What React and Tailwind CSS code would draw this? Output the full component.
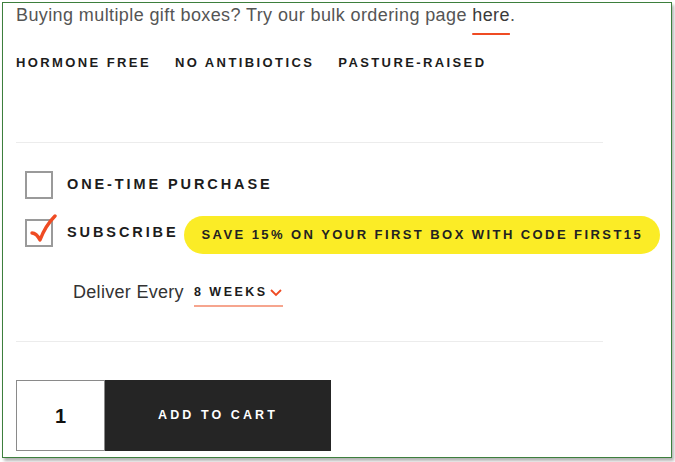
import { useState } from 'react';

const caps = "font-['Liberation_Sans',Arial,sans-serif] font-bold uppercase";

function Check({ checked }) {
  return (
    <div className="relative w-[28px] h-[28px] border-2 border-[#9a9a9a] bg-white shrink-0">
      {checked && (
        <svg className="absolute left-[2px] top-[-7px]" width="28" height="32" viewBox="0 0 28 32">
          <path
            d="M3 19 C6 19 9 22 11 26 C14 18 19 9 26 2"
            fill="none"
            stroke="#ef4b23"
            strokeWidth="3.4"
            strokeLinecap="round"
            strokeLinejoin="round"
          />
        </svg>
      )}
    </div>
  );
}

export default function App() {
  const [qty] = useState(1);

  return (
    <div className="w-[675px] h-[462px] bg-white">
      <div className="ml-[2px] mt-[2px] w-[670px] h-[456px] border border-[#3d7f3d] bg-white shadow-[2px_3px_3px_rgba(0,0,0,0.3)] pl-[13px]">
        {/* Bulk note */}
        <p className="font-['Liberation_Sans',Arial,sans-serif] text-[18px] leading-[24px] tracking-[0.4px] text-[#555555]">
          Buying multiple gift boxes? Try our bulk ordering page{' '}
          <a className="text-[#3a3a3a] underline decoration-[#ef4b23] decoration-2 underline-offset-[12px]">here</a>.
        </p>

        {/* Badges */}
        <div className={`${caps} mt-[26px] flex gap-[24px] text-[13px] tracking-[2.4px] text-[#1c1c1c]`}>
          <span>Hormone Free</span>
          <span>No Antibiotics</span>
          <span>Pasture-Raised</span>
        </div>

        <div className="mt-[69px] w-[587px] h-px bg-[#ececec]" />

        {/* Purchase options */}
        <div className="pl-[9px] mt-[28px] flex flex-col gap-[17px]">
          <label className="flex items-center gap-[14px]">
            <Check />
            <span className={`${caps} text-[14.5px] tracking-[2.9px] text-[#1c1c1c]`}>One-Time Purchase</span>
          </label>
          <div className="flex items-start">
            <label className="mt-[3px] flex items-center gap-[14px]">
              <Check checked />
              <span className={`${caps} text-[14.5px] tracking-[2.9px] text-[#1c1c1c]`}>Subscribe</span>
            </label>
            <span className={`${caps} ml-[5px] h-[38px] pl-[18px] pr-[17px] flex items-center rounded-full bg-[#fbec26] text-[13px] tracking-[2.43px] text-[#222]`}>
              Save 15% on your first box with code FIRST15
            </span>
          </div>
        </div>

        {/* Delivery frequency */}
        <div className="ml-[57px] mt-[25px] flex items-center gap-[10px]">
          <span className="font-['Liberation_Sans',Arial,sans-serif] text-[18px] tracking-[0.3px] text-[#333]">Deliver Every</span>
          <span className="flex items-center border-b-2 border-[#f6a58e] pt-[4px] pb-[4px]">
            <span className={`${caps} text-[12.5px] tracking-[2.5px] text-[#1c1c1c]`}>8 Weeks</span>
            <svg width="14" height="10" viewBox="0 0 14 10" className="ml-[1px]">
              <path d="M2 3 L7 8 L12 3" fill="none" stroke="#ef4b23" strokeWidth="1.8" />
            </svg>
          </span>
        </div>

        <div className="mt-[34px] w-[587px] h-px bg-[#ececec]" />

        {/* Cart */}
        <div className="mt-[38px] flex h-[71px]">
          <div className="w-[89px] border border-[#8a8a8a] flex items-center justify-center font-['Liberation_Sans',Arial,sans-serif] font-bold text-[20px] text-[#111]">
            {qty}
          </div>
          <button className={`${caps} w-[226px] bg-[#252525] text-white text-[12.5px] tracking-[3.1px]`}>
            Add to Cart
          </button>
        </div>
      </div>
    </div>
  );
}
